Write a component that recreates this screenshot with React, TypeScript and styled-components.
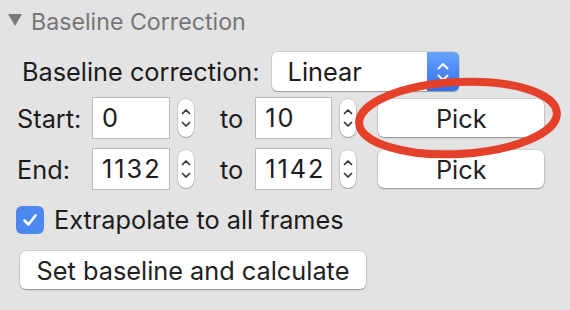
import React from 'react';
import styled, { createGlobalStyle } from 'styled-components';

const GlobalStyle = createGlobalStyle`
    html, body {
        margin: 0;
        padding: 0;
        background: #e3e3e3;
    }
    body {
        font-family: Inter, "Liberation Sans", Arial, sans-serif;
        color: #1c1c1c;
    }
`;

const Panel = styled.div`
    position: relative;
    width: 570px;
    height: 310px;
    overflow: hidden;
    background: #e3e3e3;
`;
const Header = styled.div`
    display: flex;
    align-items: center;
    gap: 9px;
    padding: 6px 0 0 8px;
    height: 32px;
    font-size: 23.2px;
    color: #767676;
`;
const Triangle = styled.span`
    width: 0;
    height: 0;
    border-left: 7px solid transparent;
    border-right: 7px solid transparent;
    border-top: 12px solid #7a7a7a;
    margin-top: -4px;
`;
const Body = styled.div`
    display: flex;
    flex-direction: column;
`;
const Row = styled.div<{ $left: number; $top: number }>`
    display: flex;
    align-items: center;
    padding-left: ${(p) => p.$left}px;
    margin-top: ${(p) => p.$top}px;
    font-size: 25.3px;
`;
const Label = styled.span<{ $width?: number }>`
    width: ${(p) => (p.$width ? `${p.$width}px` : 'auto')};
    flex-shrink: 0;
    white-space: nowrap;
`;
const Select = styled.div`
    display: flex;
    margin-left: 12px;
    width: 187px;
    height: 39px;
    border-radius: 5px;
    background: #fff;
    box-shadow: 0 0 0 0.5px rgba(0, 0, 0, 0.18), 0 1px 1px rgba(0, 0, 0, 0.25);
    overflow: hidden;
`;
const SelectText = styled.span`
    flex: 1;
    padding-left: 16px;
    line-height: 39px;
`;
const SelectArrow = styled.span`
    width: 32px;
    display: flex;
    align-items: center;
    justify-content: center;
    background: linear-gradient(#67a3fa, #2f6ef0);
`;
const Field = styled.div<{ $width?: number }>`
    width: ${(p) => p.$width ?? 78}px;
    height: 42px;
    box-sizing: border-box;
    border: 1px solid #b9b9b9;
    background: #fff;
    padding-left: 9px;
    line-height: 40px;
    letter-spacing: 2px;
    overflow: hidden;
    white-space: nowrap;
`;
const Stepper = styled.div`
    margin-left: 8px;
    width: 16px;
    height: 38px;
    border-radius: 8px;
    background: #fff;
    box-shadow: 0 0 0 0.5px rgba(0, 0, 0, 0.2), 0 1px 1px rgba(0, 0, 0, 0.25);
    display: flex;
    align-items: center;
    justify-content: center;
`;
const To = styled.span`
    margin: 0 12px 0 26px;
`;
const Button = styled.div<{ $width: number; $left: number }>`
    width: ${(p) => p.$width}px;
    margin-left: ${(p) => p.$left}px;
    height: 38px;
    box-sizing: border-box;
    border-radius: 6px;
    background: #fff;
    box-shadow: 0 0 0 0.5px rgba(0, 0, 0, 0.16), 0 1px 1.5px rgba(0, 0, 0, 0.3);
    display: flex;
    align-items: center;
    justify-content: center;
    color: #222;
    font-size: 25.3px;
`;
const Check = styled.span`
    width: 28px;
    height: 28px;
    border-radius: 6px;
    background: #4d88f1;
    display: flex;
    align-items: center;
    justify-content: center;
    margin-right: 10px;
`;
const Annotation = styled.svg`
    position: absolute;
    left: 340px;
    top: 66px;
    pointer-events: none;
`;

const StepperIcon = () => (
    <svg width="12" height="30" viewBox="0 0 12 30">
        <path d="M2.5 10.5 L6 7 L9.5 10.5" fill="none" stroke="#333" strokeWidth="1.7" strokeLinecap="round" strokeLinejoin="round" />
        <path d="M2.5 19.5 L6 23 L9.5 19.5" fill="none" stroke="#333" strokeWidth="1.7" strokeLinecap="round" strokeLinejoin="round" />
    </svg>
);

const RangeRow: React.FC<{ label: string; from: string; to: string; top: number }> = ({ label, from, to, top }) => (
    <Row $left={17} $top={top}>
        <Label $width={75}>{label}</Label>
        <Field>{from}</Field>
        <Stepper><StepperIcon /></Stepper>
        <To>to</To>
        <Field $width={77}>{to}</Field>
        <Stepper><StepperIcon /></Stepper>
        <Button $width={166} $left={22}>Pick</Button>
    </Row>
);

export default function App() {
    return (
        <Panel>
            <GlobalStyle />
            <Header>
                <Triangle />
                <span>Baseline Correction</span>
            </Header>
            <Body>
                <Row $left={22} $top={14}>
                    <Label>Baseline correction:</Label>
                    <Select>
                        <SelectText>Linear</SelectText>
                        <SelectArrow>
                            <svg width="14" height="26" viewBox="0 0 14 26">
                                <path d="M2.5 9.5 L7 5 L11.5 9.5" fill="none" stroke="#fff" strokeWidth="2" strokeLinecap="round" strokeLinejoin="round" />
                                <path d="M2.5 16.5 L7 21 L11.5 16.5" fill="none" stroke="#fff" strokeWidth="2" strokeLinecap="round" strokeLinejoin="round" />
                            </svg>
                        </SelectArrow>
                    </Select>
                </Row>
                <RangeRow label="Start:" from="0" to="10" top={6} />
                <RangeRow label="End:" from="1132" to="1142" top={9} />
                <Row $left={16} $top={14}>
                    <Check>
                        <svg width="18" height="18" viewBox="0 0 18 18">
                            <path d="M3.5 9.5 L7.5 13.5 L14.5 4.5" fill="none" stroke="#fff" strokeWidth="2.6" strokeLinecap="round" strokeLinejoin="round" />
                        </svg>
                    </Check>
                    <span>Extrapolate to all frames</span>
                </Row>
                <Row $left={20} $top={16}>
                    <Button $width={346} $left={0}>Set baseline and calculate</Button>
                </Row>
            </Body>
            <Annotation width="236" height="104" viewBox="0 0 236 104">
                <ellipse cx="118" cy="52" rx="99" ry="36" transform="rotate(-3 118 52)" fill="none" stroke="#e5402a" strokeWidth="8" />
            </Annotation>
        </Panel>
    );
}
